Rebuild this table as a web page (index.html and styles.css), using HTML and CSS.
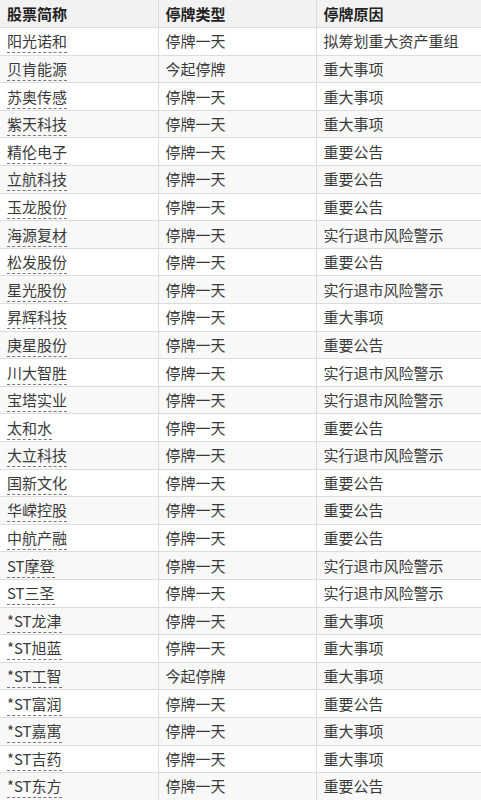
FILE: index.html
```html
<!DOCTYPE html>
<html lang="zh-CN">
<head>
<meta charset="utf-8">
<link rel="stylesheet" href="styles.css">
</head>
<body>
<table class="suspend">
<colgroup><col class="c1"><col class="c2"><col class="c3"></colgroup>
<thead>
<tr><th>股票简称</th><th>停牌类型</th><th>停牌原因</th></tr>
</thead>
<tbody>
<tr><td><a>阳光诺和</a></td><td>停牌一天</td><td>拟筹划重大资产重组</td></tr>
<tr><td><a>贝肯能源</a></td><td>今起停牌</td><td>重大事项</td></tr>
<tr><td><a>苏奥传感</a></td><td>停牌一天</td><td>重大事项</td></tr>
<tr><td><a>紫天科技</a></td><td>停牌一天</td><td>重大事项</td></tr>
<tr><td><a>精伦电子</a></td><td>停牌一天</td><td>重要公告</td></tr>
<tr><td><a>立航科技</a></td><td>停牌一天</td><td>重要公告</td></tr>
<tr><td><a>玉龙股份</a></td><td>停牌一天</td><td>重要公告</td></tr>
<tr><td><a>海源复材</a></td><td>停牌一天</td><td>实行退市风险警示</td></tr>
<tr><td><a>松发股份</a></td><td>停牌一天</td><td>重要公告</td></tr>
<tr><td><a>星光股份</a></td><td>停牌一天</td><td>实行退市风险警示</td></tr>
<tr><td><a>昇辉科技</a></td><td>停牌一天</td><td>重大事项</td></tr>
<tr><td><a>庚星股份</a></td><td>停牌一天</td><td>重要公告</td></tr>
<tr><td><a>川大智胜</a></td><td>停牌一天</td><td>实行退市风险警示</td></tr>
<tr><td><a>宝塔实业</a></td><td>停牌一天</td><td>实行退市风险警示</td></tr>
<tr><td><a>太和水</a></td><td>停牌一天</td><td>重要公告</td></tr>
<tr><td><a>大立科技</a></td><td>停牌一天</td><td>实行退市风险警示</td></tr>
<tr><td><a>国新文化</a></td><td>停牌一天</td><td>重要公告</td></tr>
<tr><td><a>华嵘控股</a></td><td>停牌一天</td><td>重要公告</td></tr>
<tr><td><a>中航产融</a></td><td>停牌一天</td><td>重要公告</td></tr>
<tr><td><a>ST摩登</a></td><td>停牌一天</td><td>实行退市风险警示</td></tr>
<tr><td><a>ST三圣</a></td><td>停牌一天</td><td>实行退市风险警示</td></tr>
<tr><td><a>*ST龙津</a></td><td>停牌一天</td><td>重大事项</td></tr>
<tr><td><a>*ST旭蓝</a></td><td>停牌一天</td><td>重大事项</td></tr>
<tr><td><a>*ST工智</a></td><td>今起停牌</td><td>重大事项</td></tr>
<tr><td><a>*ST富润</a></td><td>停牌一天</td><td>重要公告</td></tr>
<tr><td><a>*ST嘉寓</a></td><td>停牌一天</td><td>重大事项</td></tr>
<tr><td><a>*ST吉药</a></td><td>停牌一天</td><td>重大事项</td></tr>
<tr><td><a>*ST东方</a></td><td>停牌一天</td><td>重要公告</td></tr>
</tbody>
</table>
</body>
</html>
```

FILE: styles.css
```css
html, body {
  margin: 0;
  padding: 0;
  background: #ffffff;
}

body {
  font-family: "Noto Sans CJK SC", "Noto Sans", sans-serif;
  font-size: 15px;
  color: #3a3a3a;
}

.suspend {
  width: 481px;
  border-collapse: collapse;
  table-layout: fixed;
}

.c1 { width: 158px; }
.c2 { width: 158px; }
.c3 { width: 165px; }

.suspend th,
.suspend td {
  height: 27.6px;
  padding: 0 0 0 7px;
  text-align: left;
  vertical-align: middle;
  line-height: 20px;
  border-bottom: 1px solid #dcdcdc;
  border-left: 1px solid #dcdcdc;
  white-space: nowrap;
  box-sizing: border-box;
}

.suspend th:first-child,
.suspend td:first-child {
  border-left: none;
}

.suspend th {
  background: #f2f2f2;
  font-weight: bold;
  color: #222222;
}

.suspend tbody tr:nth-child(even) td {
  background: #f8f8f8;
}

.suspend a {
  color: #3a3a3a;
  text-decoration: none;
  border-bottom: 1px dashed #777777;
  padding-bottom: 1px;
}
```
